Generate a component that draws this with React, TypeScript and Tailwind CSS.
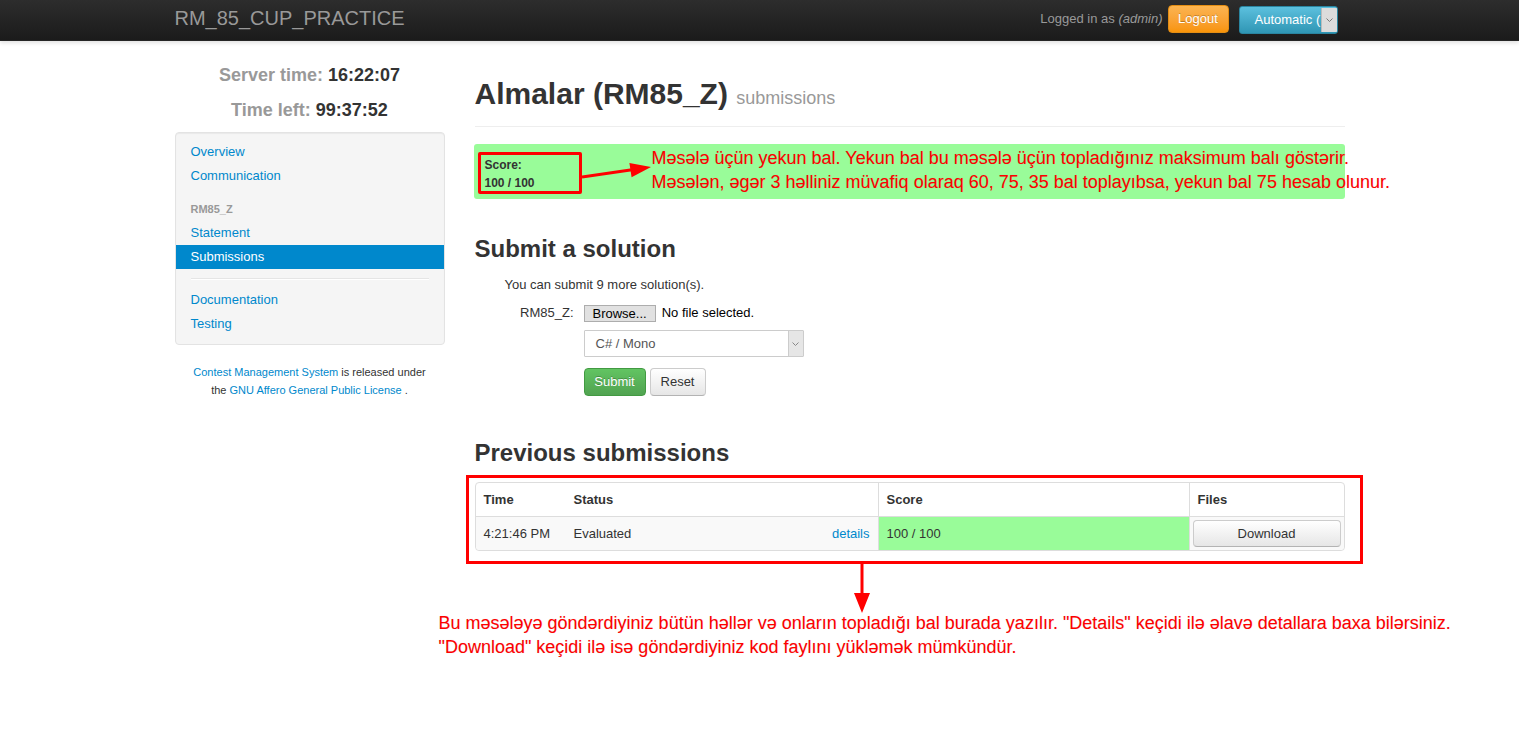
import React from 'react';

const font = "font-['Liberation_Sans',Arial,sans-serif]";

const Navbar: React.FC = () => (
  <div className="h-[41px] bg-gradient-to-b from-[#2d2d2d] to-[#1b1b1b] border-b border-[#252525] shadow-[0_2px_4px_rgba(0,0,0,0.12)]">
    <div className="w-[1170px] mx-auto h-full flex items-center justify-between">
      <span className="text-[20px] text-[#999] leading-[20px] -mt-[4px]">RM_85_CUP_PRACTICE</span>
      <div className="flex items-center h-full pr-[7px]">
        <span className="text-[13px] text-[#999] -mt-[2px]">
          Logged in as <i>(admin)</i>
        </span>
        <button className="ml-[5px] -mt-[3px] h-[28px] w-[61px] rounded-[4px] border border-[#e38d13] bg-gradient-to-b from-[#fbb450] to-[#f89406] text-white text-[13px] [text-shadow:0_-1px_0_rgba(0,0,0,0.25)]">
          Logout
        </button>
        <div className="ml-[10px] h-[28px] w-[99px] rounded-[3px] border border-[#2a85a0] bg-gradient-to-b from-[#5bc0de] to-[#2f96b4] flex overflow-hidden">
          <span className="flex-1 text-white text-[13px] leading-[26px] pl-[15px] whitespace-nowrap overflow-hidden">Automatic (</span>
          <span className="w-[16px] my-[1px] bg-[#dcdcdc] border-l border-[#bbb] flex items-center justify-center">
            <svg width="7" height="4" viewBox="0 0 7 4"><path d="M0.5 0.5 L3.5 3.5 L6.5 0.5" stroke="#777" strokeWidth="1" fill="none" /></svg>
          </span>
        </div>
      </div>
    </div>
  </div>
);

const NavItem: React.FC<{ label: string; active?: boolean }> = ({ label, active }) => (
  <div className={`h-[24px] leading-[24px] pl-[15px] text-[13px] ${active ? 'bg-[#0088cc] text-white' : 'text-[#0088cc]'}`}>
    {label}
  </div>
);

const Sidebar: React.FC = () => (
  <div className="w-[270px] shrink-0">
    <div className="mt-[22px] text-center text-[18px] font-bold leading-[24px]">
      <span className="text-[#999]">Server time:</span> <span className="text-[#333]">16:22:07</span>
    </div>
    <div className="mt-[11px] text-center text-[18px] font-bold leading-[24px]">
      <span className="text-[#999]">Time left:</span> <span className="text-[#333]">99:37:52</span>
    </div>
    <div className="mt-[10px] bg-[#f5f5f5] border border-[#e3e3e3] rounded-[4px] pt-[7px] pb-[8px] shadow-[inset_0_1px_1px_rgba(0,0,0,0.05)]">
      <NavItem label="Overview" />
      <NavItem label="Communication" />
      <div className="mt-[9px] h-[24px] leading-[24px] pl-[15px] text-[11px] font-bold text-[#999]">RM85_Z</div>
      <NavItem label="Statement" />
      <NavItem label="Submissions" active />
      <div className="mx-[15px] mt-[9px] mb-[8px] h-[2px] border-t border-[#e5e5e5] border-b border-b-white" />
      <NavItem label="Documentation" />
      <NavItem label="Testing" />
    </div>
    <div className="mt-[18px] text-center text-[11px] leading-[18px] text-[#333]">
      <span className="text-[#0088cc]">Contest Management System</span> is released under
      <br />
      the <span className="text-[#0088cc]">GNU Affero General Public License</span> .
    </div>
  </div>
);

const ScoreAlert: React.FC = () => (
  <div className="mt-[17px] ml-[-1px] w-[871px] h-[55px] bg-[#99fc99] rounded-[3px] flex items-start">
    <div className="shrink-0 ml-[4px] mt-[8px] w-[104px] h-[42px] border-[3px] border-[#ff0000] rounded-[2px] pl-[4px] text-[12px] font-bold text-[#333] leading-[18px] pt-[1px]">
      Score:
      <br />
      100 / 100
    </div>
    <svg width="70" height="55" viewBox="0 0 70 55" className="shrink-0">
      <line x1="0" y1="33" x2="50" y2="25.7" stroke="#ff0000" strokeWidth="3" />
      <polygon points="69,23 49.6,33.2 47.4,19" fill="#ff0000" />
    </svg>
    <div className="shrink-0 mt-[2px] text-[18px] leading-[24px] text-[#ff0000] whitespace-nowrap [text-shadow:0_0_1px_rgba(0,0,0,0.15)]">
      Məsələ üçün yekun bal. Yekun bal bu məsələ üçün topladığınız maksimum balı göstərir.
      <br />
      Məsələn, əgər 3 həlliniz müvafiq olaraq 60, 75, 35 bal toplayıbsa, yekun bal 75 hesab olunur.
    </div>
  </div>
);

const SubmitForm: React.FC = () => (
  <div>
    <h2 className="mt-[30px] text-[24px] leading-[40px] font-bold text-[#333]">Submit a solution</h2>
    <p className="mt-[6px] ml-[30px] text-[13px] leading-[20px] text-[#333]">You can submit 9 more solution(s).</p>
    <div className="mt-[8px] flex items-center">
      <div className="w-[99px] text-right text-[13px] text-[#333] leading-[20px]">RM85_Z:</div>
      <div className="ml-[10px] flex items-center">
        <span className="h-[17px] px-[8px] bg-[#e1e1e1] border border-[#adadad] text-[13px] leading-[15px] text-[#000]">Browse...</span>
        <span className="ml-[6px] text-[13px] text-[#000]">No file selected.</span>
      </div>
    </div>
    <div className="mt-[7px] ml-[109px] w-[220px] h-[27px] border border-[#ccc] rounded-[1px] flex bg-white">
      <span className="flex-1 text-[13px] text-[#555] leading-[25px] pl-[11px]">C# / Mono</span>
      <span className="w-[15px] bg-[#e6e6e6] border-l border-[#ccc] flex items-center justify-center">
        <svg width="7" height="4" viewBox="0 0 7 4"><path d="M0.5 0.5 L3.5 3.5 L6.5 0.5" stroke="#888" strokeWidth="1" fill="none" /></svg>
      </span>
    </div>
    <div className="mt-[11px] ml-[109px] flex gap-[4px]">
      <button className="h-[28px] w-[62px] rounded-[4px] border border-[#429a42] bg-gradient-to-b from-[#62c462] to-[#51a351] text-white text-[13px] [text-shadow:0_-1px_0_rgba(0,0,0,0.25)]">
        Submit
      </button>
      <button className="h-[28px] w-[56px] rounded-[4px] border border-[#ccc] border-b-[#b3b3b3] bg-gradient-to-b from-white to-[#e6e6e6] text-[#333] text-[13px]">
        Reset
      </button>
    </div>
  </div>
);

const Submissions: React.FC = () => (
  <div>
    <h2 className="mt-[37px] text-[24px] leading-[40px] font-bold text-[#333]">Previous submissions</h2>
    <div className="mt-[2px] ml-[-9px] w-[897px] border-[3px] border-[#ff0000] pt-[4px] pb-[10px] pl-[6px]">
      <table className="w-[870px] table-fixed border-separate border-spacing-0 border border-[#ddd] rounded-[4px] text-[13px] text-[#333]">
        <colgroup>
          <col className="w-[90px]" />
          <col className="w-[312px]" />
          <col className="w-[311px]" />
          <col />
        </colgroup>
        <thead>
          <tr className="text-left">
            <th className="px-[8px] h-[34px] font-bold border-b border-[#ddd]">Time</th>
            <th className="px-[8px] font-bold border-b border-[#ddd]">Status</th>
            <th className="px-[8px] font-bold border-b border-l border-[#ddd]">Score</th>
            <th className="px-[8px] font-bold border-b border-l border-[#ddd]">Files</th>
          </tr>
        </thead>
        <tbody>
          <tr>
            <td className="px-[8px] h-[33px] bg-[#f9f9f9] rounded-bl-[4px]">4:21:46 PM</td>
            <td className="px-[8px] bg-[#f9f9f9]">
              <div className="flex justify-between">
                <span>Evaluated</span>
                <span className="text-[#0088cc]">details</span>
              </div>
            </td>
            <td className="px-[8px] bg-[#99fc99] border-l border-[#ddd]">100 / 100</td>
            <td className="px-[3px] bg-[#f9f9f9] border-l border-[#ddd] rounded-br-[4px]">
              <button className="w-full h-[27px] rounded-[4px] border border-[#ccc] border-b-[#b3b3b3] bg-gradient-to-b from-white to-[#e6e6e6] text-[#333] text-[13px]">
                Download
              </button>
            </td>
          </tr>
        </tbody>
      </table>
    </div>
    <svg width="16" height="49" viewBox="0 0 16 49" className="ml-[379px] block">
      <line x1="8" y1="0" x2="8" y2="30" stroke="#ff0000" strokeWidth="3" />
      <polygon points="0,29 16,29 8,49" fill="#ff0000" />
    </svg>
    <div className="-mt-[2px] ml-[-36px] text-[18px] leading-[24px] text-[#ff0000] whitespace-nowrap [text-shadow:0_0_1px_rgba(0,0,0,0.15)]">
      Bu məsələyə göndərdiyiniz bütün həllər və onların topladığı bal burada yazılır. "Details" keçidi ilə əlavə detallara baxa bilərsiniz.
      <br />
      "Download" keçidi ilə isə göndərdiyiniz kod faylını yükləmək mümkündür.
    </div>
  </div>
);

export default function App() {
  return (
    <div className={`min-h-screen bg-white ${font}`}>
      <Navbar />
      <div className="w-[1170px] mx-auto flex gap-[30px]">
        <Sidebar />
        <div className="w-[870px]">
          <div className="mt-[33px] pb-[8px] border-b border-[#eee]">
            <h1 className="text-[30px] leading-[40px] font-bold text-[#333]">
              Almalar (RM85_Z) <span className="text-[18px] font-normal text-[#999]">submissions</span>
            </h1>
          </div>
          <ScoreAlert />
          <SubmitForm />
          <Submissions />
        </div>
      </div>
    </div>
  );
}
